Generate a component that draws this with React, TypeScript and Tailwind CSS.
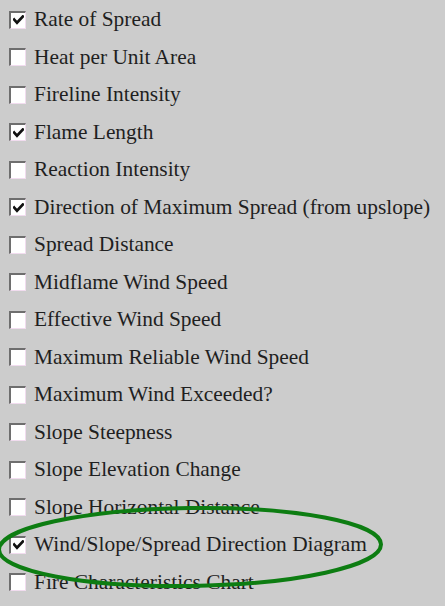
import React from "react";

type Item = { label: string; checked: boolean };

const items: Item[] = [
  { label: "Rate of Spread", checked: true },
  { label: "Heat per Unit Area", checked: false },
  { label: "Fireline Intensity", checked: false },
  { label: "Flame Length", checked: true },
  { label: "Reaction Intensity", checked: false },
  { label: "Direction of Maximum Spread (from upslope)", checked: true },
  { label: "Spread Distance", checked: false },
  { label: "Midflame Wind Speed", checked: false },
  { label: "Effective Wind Speed", checked: false },
  { label: "Maximum Reliable Wind Speed", checked: false },
  { label: "Maximum Wind Exceeded?", checked: false },
  { label: "Slope Steepness", checked: false },
  { label: "Slope Elevation Change", checked: false },
  { label: "Slope Horizontal Distance", checked: false },
  { label: "Wind/Slope/Spread Direction Diagram", checked: true },
  { label: "Fire Characteristics Chart", checked: false },
];

function Box({ checked }: { checked: boolean }) {
  return (
    <span className="flex h-[18px] w-[17px] shrink-0 items-center justify-center border-l-2 border-t-2 border-b border-r border-l-[#6e6e6e] border-t-[#6e6e6e] border-b-[#f1dcef] border-r-[#f1dcef] bg-white">
      {checked && (
        <svg width="11" height="10" viewBox="0 0 11 10">
          <path d="M1.2 4.6 L4 7.6 L9.8 1.6" fill="none" stroke="#111" strokeWidth="2.8" strokeLinecap="square" />
        </svg>
      )}
    </span>
  );
}

export default function App() {
  return (
    <div className="relative h-[606px] w-[445px] overflow-hidden bg-[#cccccc] pt-[1px] font-['Liberation_Serif','Times_New_Roman',serif]">
      <ul className="flex flex-col">
        {items.map((it) => (
          <li key={it.label} className="flex h-[37.5px] items-center pl-[9px]">
            <Box checked={it.checked} />
            <span className="ml-[8px] whitespace-nowrap text-[21.4px] leading-none text-[#1f1f1f]">
              {it.label}
            </span>
          </li>
        ))}
      </ul>
      <svg className="pointer-events-none absolute left-0 top-0" width="445" height="606" viewBox="0 0 445 606">
        <ellipse
          cx="190"
          cy="547"
          rx="191"
          ry="39"
          transform="rotate(-0.8 190 547)"
          fill="none"
          stroke="#0d7d12"
          strokeWidth="4"
        />
      </svg>
    </div>
  );
}
